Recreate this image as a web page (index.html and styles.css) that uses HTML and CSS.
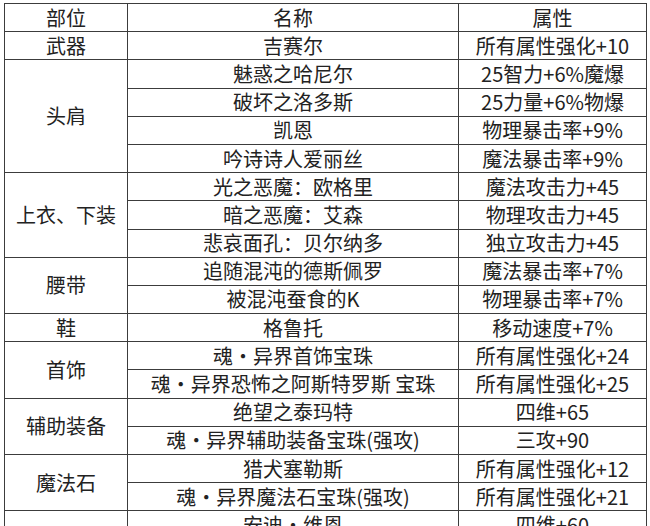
FILE: index.html
```html
<!DOCTYPE html>
<html lang="zh-CN">
<head>
<meta charset="utf-8">
<title>装备属性表</title>
<link rel="stylesheet" href="styles.css">
</head>
<body>
<table class="gear">
  <colgroup>
    <col class="c-slot">
    <col class="c-name">
    <col class="c-attr">
  </colgroup>
  <tr><td>部位</td><td>名称</td><td>属性</td></tr>
  <tr><td>武器</td><td>吉赛尔</td><td>所有属性强化+10</td></tr>
  <tr><td rowspan="4">头肩</td><td>魅惑之哈尼尔</td><td>25智力+6%魔爆</td></tr>
  <tr><td>破坏之洛多斯</td><td>25力量+6%物爆</td></tr>
  <tr><td>凯恩</td><td>物理暴击率+9%</td></tr>
  <tr><td>吟诗诗人爱丽丝</td><td>魔法暴击率+9%</td></tr>
  <tr><td rowspan="3">上衣、下装</td><td>光之恶魔：欧格里</td><td>魔法攻击力+45</td></tr>
  <tr><td>暗之恶魔：艾森</td><td>物理攻击力+45</td></tr>
  <tr><td>悲哀面孔：贝尔纳多</td><td>独立攻击力+45</td></tr>
  <tr><td rowspan="2">腰带</td><td>追随混沌的德斯佩罗</td><td>魔法暴击率+7%</td></tr>
  <tr><td>被混沌蚕食的K</td><td>物理暴击率+7%</td></tr>
  <tr><td>鞋</td><td>格鲁托</td><td>移动速度+7%</td></tr>
  <tr><td rowspan="2">首饰</td><td>魂・异界首饰宝珠</td><td>所有属性强化+24</td></tr>
  <tr><td>魂・异界恐怖之阿斯特罗斯 宝珠</td><td>所有属性强化+25</td></tr>
  <tr><td rowspan="2">辅助装备</td><td>绝望之泰玛特</td><td>四维+65</td></tr>
  <tr><td>魂・异界辅助装备宝珠(强攻)</td><td>三攻+90</td></tr>
  <tr><td rowspan="2">魔法石</td><td>猎犬塞勒斯</td><td>所有属性强化+12</td></tr>
  <tr><td>魂・异界魔法石宝珠(强攻)</td><td>所有属性强化+21</td></tr>
  <tr><td></td><td>安迪・维恩</td><td>四维+60</td></tr>
</table>
</body>
</html>
```
FILE: styles.css
```css
html, body {
  margin: 0;
  padding: 0;
  background: #ffffff;
  overflow: hidden;
  height: 526px;
}
body {
  padding: 3px 0 0 4px;
  font-family: "Noto Sans CJK SC", "Noto Sans", sans-serif;
  color: #222;
}
.gear {
  border-collapse: collapse;
  width: 642px;
  table-layout: fixed;
  font-size: 20px;
}
.c-slot { width: 123px; }
.c-name { width: 331px; }
.c-attr { width: 188px; }
.gear tr { height: 28.2px; }
.gear td {
  border: 1px solid #3c3c3c;
  padding: 0;
  text-align: center;
  vertical-align: middle;
  line-height: 26px;
  white-space: nowrap;
}
```
